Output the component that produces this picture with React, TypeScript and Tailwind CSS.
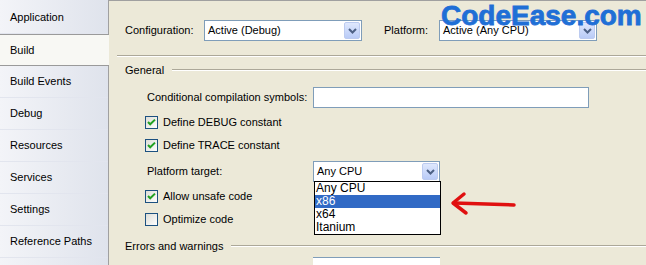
import React from "react";

const font = { fontFamily: '"Liberation Sans", Arial, sans-serif' };

function Chevron() {
  return (
    <svg width="9" height="6" viewBox="0 0 9 6">
      <path d="M1 1 L4.5 4.5 L8 1" fill="none" stroke="#4d6185" strokeWidth="2" />
    </svg>
  );
}

function Select({ value, w }: { value: string; w: string }) {
  return (
    <div className={`${w} h-[21px] bg-white border border-[#7f9db9] flex items-center p-[1px]`}>
      <span className="flex-1 pl-[2px] text-[11px] text-black leading-none">{value}</span>
      <div className="w-[16px] h-full rounded-[2px] border border-[#bccbf0] bg-gradient-to-b from-[#dfe8fd] to-[#b9cbf7] flex items-center justify-center">
        <Chevron />
      </div>
    </div>
  );
}

function Check({ checked }: { checked: boolean }) {
  return (
    <svg width="13" height="13" viewBox="0 0 13 13" className="shrink-0">
      <defs>
        <linearGradient id={checked ? "cg1" : "cg2"} x1="0" y1="0" x2="1" y2="1">
          <stop offset="0" stopColor="#dcdcd5" />
          <stop offset="1" stopColor="#ffffff" />
        </linearGradient>
      </defs>
      <rect x="0.5" y="0.5" width="12" height="12" fill={`url(#${checked ? "cg1" : "cg2"})`} stroke="#1c5180" />
      {checked && (
        <path d="M3 6 L5.2 8.3 L10 3.6" fill="none" stroke="#21a121" strokeWidth="2" />
      )}
    </svg>
  );
}

function Item({ label, selected }: { label: string; selected?: boolean }) {
  return (
    <div
      className={`h-[32px] flex items-center pl-[10px] text-[11px] text-black ${
        selected
          ? "bg-[#f8f8f4] border-y border-[#9a9a9a] mr-[-1px] relative z-10"
          : "border-b border-[#e2e5ee]"
      }`}
    >
      {label}
    </div>
  );
}

function GroupLine({ label }: { label: string }) {
  return (
    <div className="flex items-center h-[14px] pl-[16px] pr-0">
      <span className="text-[11px] text-black mr-[8px]">{label}</span>
      <div className="flex-1 border-t border-[#aca899] border-b border-b-white" />
    </div>
  );
}

export default function App() {
  return (
    <div className="w-[646px] h-[265px] flex overflow-hidden relative bg-[#ece9d8]" style={font}>
      <div className="w-[109px] shrink-0 pt-[2px] bg-gradient-to-r from-[#f3f4f8] to-[#dfe3ec] border-r border-[#a0a0a0] flex flex-col">
        <Item label="Application" />
        <Item label="Build" selected />
        <Item label="Build Events" />
        <Item label="Debug" />
        <Item label="Resources" />
        <Item label="Services" />
        <Item label="Settings" />
        <Item label="Reference Paths" />
        <div className="flex-1" />
      </div>
      <div className="flex-1 border-t border-[#a0a0a0] flex flex-col text-[11px] text-black">
        <div className="flex items-center h-[21px] mt-[19px] pl-[16px]">
          <span className="w-[79px]">Configuration:</span>
          <Select value="Active (Debug)" w="w-[158px]" />
          <span className="ml-[22px] w-[55px]">Platform:</span>
          <Select value="Active (Any CPU)" w="w-[158px]" />
        </div>
        <div className="ml-[8px] mt-[14px] border-t border-[#aca899] border-b border-b-white" />
        <div className="mt-[6px]">
          <GroupLine label="General" />
        </div>
        <div className="flex items-center h-[21px] mt-[10px] pl-[38px]">
          <span className="w-[166px]">Conditional compilation symbols:</span>
          <div className="w-[276px] h-[21px] bg-white border border-[#7f9db9]" />
        </div>
        <div className="flex items-center h-[13px] mt-[8px] pl-[36px] gap-[5px]">
          <Check checked />
          <span>Define DEBUG constant</span>
        </div>
        <div className="flex items-center h-[13px] mt-[10px] pl-[36px] gap-[5px]">
          <Check checked />
          <span>Define TRACE constant</span>
        </div>
        <div className="flex items-center h-[21px] mt-[9px] pl-[38px]">
          <span className="w-[166px]">Platform target:</span>
          <Select value="Any CPU" w="w-[127px]" />
        </div>
        <div className="flex items-center h-[13px] mt-[8px] pl-[36px] gap-[5px]">
          <Check checked />
          <span>Allow unsafe code</span>
        </div>
        <div className="flex items-center h-[13px] mt-[10px] pl-[36px] gap-[5px]">
          <Check checked={false} />
          <span>Optimize code</span>
        </div>
        <div className="mt-[13px]">
          <GroupLine label="Errors and warnings" />
        </div>
        <div className="ml-[204px] mt-[4px] w-[127px] h-[10px] border-t border-[#7f9db9] bg-white" />
      </div>

      {/* dropdown list overlay */}
      <div className="absolute left-[314px] top-[181px] w-[127px] border border-black bg-white text-[12px] leading-[13px] text-black flex flex-col">
        <div className="h-[13px] pl-[1px]">Any CPU</div>
        <div className="h-[13px] pl-[1px] bg-[#316ac5] text-white">x86</div>
        <div className="h-[13px] pl-[1px]">x64</div>
        <div className="h-[13px] pl-[1px]">Itanium</div>
      </div>

      {/* red arrow */}
      <svg className="absolute left-[448px] top-[190px]" width="72" height="30" viewBox="0 0 72 30">
        <path d="M6 13 L66 15" stroke="#e01010" strokeWidth="3.5" strokeLinecap="round" fill="none" />
        <path d="M16 4 L5 13 L18 23" stroke="#e01010" strokeWidth="3.5" strokeLinecap="round" strokeLinejoin="round" fill="none" />
      </svg>

      {/* watermark */}
      <div
        className="absolute left-[441px] top-[0px] text-[28px] font-bold leading-[32px] text-[#1f6fd6] whitespace-nowrap"
        style={{ fontFamily: '"Liberation Sans", Arial, sans-serif', WebkitTextStroke: "0.8px #1f6fd6" }}
      >
        CodeEase.com
      </div>
    </div>
  );
}
